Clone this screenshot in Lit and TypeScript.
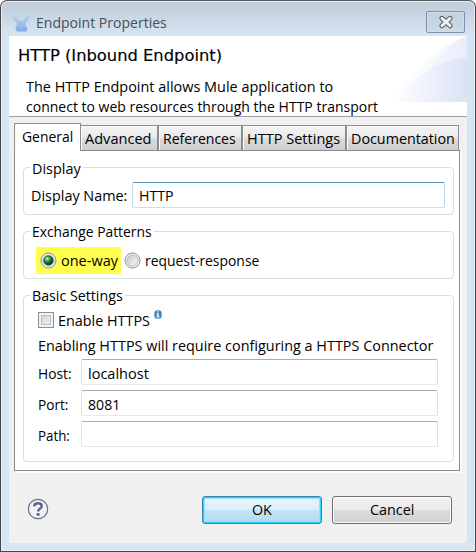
import { LitElement, html, css, svg } from "lit";
import { customElement, property, query } from "lit/decorators.js";

/** A single line of text condensed or widened to occupy a given width. */
@customElement("fit-text")
class FitText extends LitElement {
  @property({ type: Number }) w = 0;
  @property() text = "";
  @query("span") span!: HTMLSpanElement;

  static styles = css`
    :host { display: block; flex: none; height: 20px; line-height: 20px; white-space: nowrap; }
    span { display: inline-block; transform-origin: 0 50%; }
  `;

  render() {
    return html`<span>${this.text}</span>`;
  }

  updated() {
    this.style.width = `${this.w}px`;
    this.span.style.transform = `scaleX(${this.w / this.span.offsetWidth})`;
  }
}

const t = (text: string, w: number, cls = "") =>
  html`<fit-text class=${cls} .text=${text} .w=${w}></fit-text>`;

const TABS: [string, number, number][] = [
  ["General", 51, 67],
  ["Advanced", 66, 77],
  ["References", 73, 84],
  ["HTTP Settings", 93, 104],
  ["Documentation", 104, 113],
];

const FIELDS: [string, number, string, number][] = [
  ["Host:", 34, "localhost", 61],
  ["Port:", 30, "8081", 32],
  ["Path:", 32, "", 0],
];

const radio = (on: boolean) => html`
  <svg class="radio" width="17" height="17" viewBox="0 0 17 17">
    <defs>
      <radialGradient id="ball" cx=".35" cy=".3" r=".75">
        <stop offset="0" stop-color="#d4ffd0" /><stop offset=".3" stop-color="#4fb648" />
        <stop offset=".65" stop-color="#145a2c" /><stop offset="1" stop-color="#0b3435" />
      </radialGradient>
      <linearGradient id="well" x1="0" y1="0" x2="1" y2="1">
        <stop offset="0" stop-color="#c3c7cc" /><stop offset="1" stop-color="#fafafa" />
      </linearGradient>
    </defs>
    <circle cx="8.5" cy="8.5" r="7.5" fill="#f6f6f6" stroke="#8a8d8e" />
    <circle cx="8.5" cy="8.5" r="5.5" fill="url(#well)" stroke="#b4b9be" />
    ${on ? svg`<circle cx="8.5" cy="8.5" r="4.6" fill="url(#ball)" stroke="#103f38" stroke-width=".8" />` : ""}
  </svg>`;

@customElement("app-root")
class AppRoot extends LitElement {
  static styles = css`
    :host { display: block; width: 476px; height: 552px; background: #fff;
      font: 15px/20px "Open Sans", "Noto Sans", sans-serif; color: #000; }
    * { box-sizing: border-box; }
    .window { display: flex; flex-direction: column; height: 552px; padding: 0 8px 8px;
      border: 1px solid #47474b; border-top-color: #55575c; border-radius: 7px 7px 0 0;
      background: linear-gradient(#bfcddb 0, #c8d5e2 14px, #d7e4f2 35px, #d7e4f1 100%);
      box-shadow: inset 0 0 0 1px #e3edf7; }
    .titlebar { display: flex; height: 35px; flex: none; align-items: flex-start; }
    .mule { margin: 12px 6px 0 3px; }
    .title { color: #46505c; margin-top: 11px; }
    .close { display: flex; align-items: center; justify-content: center; width: 39px; height: 22px;
      margin: 10px 2px 0 auto; border: 1px solid #8190b1; border-radius: 2px;
      background: linear-gradient(#c3d0de, #ccd9e6); box-shadow: inset 0 0 0 1px #d2deea; }
    .client { flex: 1; display: flex; flex-direction: column; background: #f0f0f0; min-height: 0; }
    .header { display: flex; height: 81px; flex: none; background: #fff; border-bottom: 1px solid #9d9fa0; }
    .header-text { padding: 10px 0 0 9px; width: 375px; flex: none; }
    .heading { font-family: "DejaVu Sans", sans-serif; font-size: 16px; -webkit-text-stroke: .15px #000; }
    .desc { margin: 10px 0 0 8px; }
    .desc + .desc { margin-top: 0; }
    .tabs { display: flex; align-items: flex-end; height: 33px; padding-left: 5px; flex: none; }
    .tab { height: 25px; padding: 2px 0 0 4px; border: 1px solid #898c95; border-bottom: 0;
      background: linear-gradient(#f3f3f3, #ebebeb 45%, #dadada 55%, #cfcfcf);
      box-shadow: inset 1px 1px 0 #fbfbfb; flex: none; }
    .tab.active { height: 28px; padding: 2px 0 0 7px; background: #fff; margin-bottom: -1px; z-index: 1; }
    .tab.after { border-left: 0; }
    .pane { width: 446px; height: 321px; flex: none; margin-left: 5px; padding: 16px 5px 0 8px;
      background: #fff; border: 1px solid #898c95; box-shadow: 2px 2px 0 #fbfbfb; }
    .group { width: 431px; height: 48px; margin-bottom: 16px; border: 1px solid #d5dfe5; border-radius: 4px; }
    .group.basic { height: 167px; margin-bottom: 0; }
    .legend { width: max-content; margin: -11px 0 0 6px; padding: 0 2px; background: #fff; }
    .display .legend { margin-top: -10px; }
    .row { display: flex; align-items: center; }
    .display .row { margin: 4px 0 0 7px; }
    .input { height: 26px; padding: 3px 6px 0; border: 1px solid #e2e3ea; border-color: #abadb3 #dbdfe6 #e3e9ef #e2e3ea;
      border-radius: 2px; background: #fff; }
    .display .input { width: 313px; margin-left: 5px; padding-top: 2px; border-color: #5794bf #b7d5ea #c7e2f1 #c5daed; }
    .patterns .row { margin: 6px 0 0 12px; }
    .mark { display: flex; align-items: center; width: 85px; height: 27px; padding: 0 0 1px 4px; background: #ffff4f; }
    .radio { flex: none; margin-right: 4px; }
    .mark + .radio { margin: -1px 4px 0 3px; }
    .mark ~ fit-text { margin-top: -1px; }
    .check { width: 16px; height: 16px; border: 1px solid #8e8f8f; box-shadow: inset 0 0 0 2px #f4f4f4, inset 0 0 0 3px #b9bdc2;
      background: linear-gradient(135deg, #cbcfd5, #f6f6f6); margin-right: 4px; }
    .enable { margin: 5px 0 0 14px; }
    .info { margin: -12px 0 0 4px; }
    .note { margin: 5px 0 4px 14px; }
    .field { margin: 0 0 5px 14px; align-items: flex-start; }
    .name { width: 43px; padding-top: 4px; }
    .field .input { width: 357px; }
    .footer { display: flex; padding: 25px 15px 0 18px; align-items: flex-start; }
    .button { display: flex; justify-content: center; width: 120px; height: 28px; padding-top: 2px;
      border: 1px solid #707070; border-radius: 3px; box-shadow: inset 0 0 0 1px #fbfbfb;
      background: linear-gradient(#f2f2f2, #ebebeb 48%, #dddddd 50%, #cfcfcf); }
    .ok { margin: 0 10px 0 auto; border-color: #3c7fb1; box-shadow: inset 0 0 0 1px #2fd0fa, inset 0 0 0 2px #8fe2fa;
      background: linear-gradient(#eaf5fb, #dceffa 48%, #c2e4f6 50%, #b2dcf1); }
    .help { margin-top: 2px; }
  `;

  render() {
    return html`
      <div class="window">
        <div class="titlebar">
          <svg class="mule" width="18" height="19" viewBox="0 0 18 19">
            <defs><linearGradient id="m" x1="0" y1="0" x2="0" y2="1">
              <stop offset="0" stop-color="#c0d5ef" /><stop offset=".6" stop-color="#9bbfea" /><stop offset="1" stop-color="#83a9dc" />
            </linearGradient></defs>
            <path fill="url(#m)" d="M1 .5C0 3 .5 6.500 4.500 9.500L5 12L3.500 15.500Q3.500 18.500 6 18.500H12.500Q15.500 18.500 15 15L13.500 12V9.500C18 6.500 18.500 3 17 .5C15.500 2.500 13 4 11.700 7.500H6.600C5.500 4 2.500 3 1 .5Z" />
          </svg>
          ${t("Endpoint Properties", 131, "title")}
          <div class="close">
            <svg width="16" height="14" viewBox="0 0 16 14">
              <path d="M4 3.300L12 10.700M12 3.300L4 10.700" stroke="#515866" stroke-width="5" stroke-linecap="round" />
              <path d="M4 3.300L12 10.700M12 3.300L4 10.700" stroke="#f3f3f3" stroke-width="3" stroke-linecap="round" />
            </svg>
          </div>
        </div>
        <div class="client">
          <div class="header">
            <div class="header-text">
              ${t("HTTP (Inbound Endpoint)", 204, "heading")}
              ${t("The HTTP Endpoint allows Mule application to", 307, "desc")}
              ${t("connect to web resources through the HTTP transport", 352, "desc")}
            </div>
            <svg width="83" height="66" viewBox="0 0 83 66">
              <defs>
                <linearGradient id="a" x1="0" x2="1"><stop offset="0" stop-color="#fff" /><stop offset=".3" stop-color="#fafbfe" /><stop offset="1" stop-color="#e8edf9" /></linearGradient>
                <linearGradient id="b" x1="0" x2="1"><stop offset="0" stop-color="#fff" /><stop offset=".4" stop-color="#f1f4fc" /><stop offset="1" stop-color="#dbe2f5" /></linearGradient>
              </defs>
              <path fill="url(#a)" d="M8 66Q38 17 83 0V66Z" />
              <path fill="#fff" opacity=".4" d="M8 66Q38 17 80 1Q58 14 44 36Q24 48 8 66Z" />
              <path fill="url(#b)" d="M8 66Q40 27 83 21V66Z" />
            </svg>
          </div>
          <div class="tabs">
            ${TABS.map(([name, w, full], i) => html`
              <div class="tab ${i === 0 ? "active" : i === 1 ? "after" : ""}" style="width:${full}px">${t(name, w)}</div>`)}
          </div>
          <div class="pane">
            <div class="group display">
              <div class="legend">${t("Display", 49)}</div>
              <div class="row">
                ${t("Display Name:", 96)}
                <div class="input">${t("HTTP", 35)}</div>
              </div>
            </div>
            <div class="group patterns">
              <div class="legend">${t("Exchange Patterns", 120)}</div>
              <div class="row">
                <div class="mark">${radio(true)}${t("one-way", 57)}</div>
                ${radio(false)}${t("request-response", 114)}
              </div>
            </div>
            <div class="group basic">
              <div class="legend">${t("Basic Settings", 91)}</div>
              <div class="row enable">
                <div class="check"></div>
                ${t("Enable HTTPS", 92)}
                <svg class="info" width="8" height="9" viewBox="0 0 8 9">
                  <rect x=".3" y=".3" width="7.400" height="8.400" rx="3" fill="#4388bd" />
                  <path d="M3.300 1.300H4.700V2.500H3.300ZM2.500 3.500H4.700V6.500H5.500V7.400H2.500V6.500H3.300V4.400H2.500Z" fill="#fff" />
                </svg>
              </div>
              ${t("Enabling HTTPS will require configuring a HTTPS Connector", 395, "note")}
              ${FIELDS.map(([name, w, value, vw]) => html`
                <div class="row field">
                  <div class="name">${t(name, w)}</div>
                  <div class="input">${value ? t(value, vw) : ""}</div>
                </div>`)}
            </div>
          </div>
          <div class="footer">
            <svg class="help" width="22" height="22" viewBox="0 0 22 22">
              <circle cx="11" cy="11" r="9.700" fill="#f2f3f5" stroke="#63718d" stroke-width="1.200" />
              <path d="M7.200 8.300Q7.400 5.300 11 5.300Q14.700 5.300 14.700 8.200Q14.700 9.900 12.700 10.900Q11.200 11.700 11.200 13.500" fill="none" stroke="#5b6a88" stroke-width="2.500" />
              <circle cx="11.100" cy="16.300" r="1.600" fill="#5b6a88" />
            </svg>
            <div class="button ok">${t("OK", 20)}</div>
            <div class="button">${t("Cancel", 44)}</div>
          </div>
        </div>
      </div>`;
  }
}
